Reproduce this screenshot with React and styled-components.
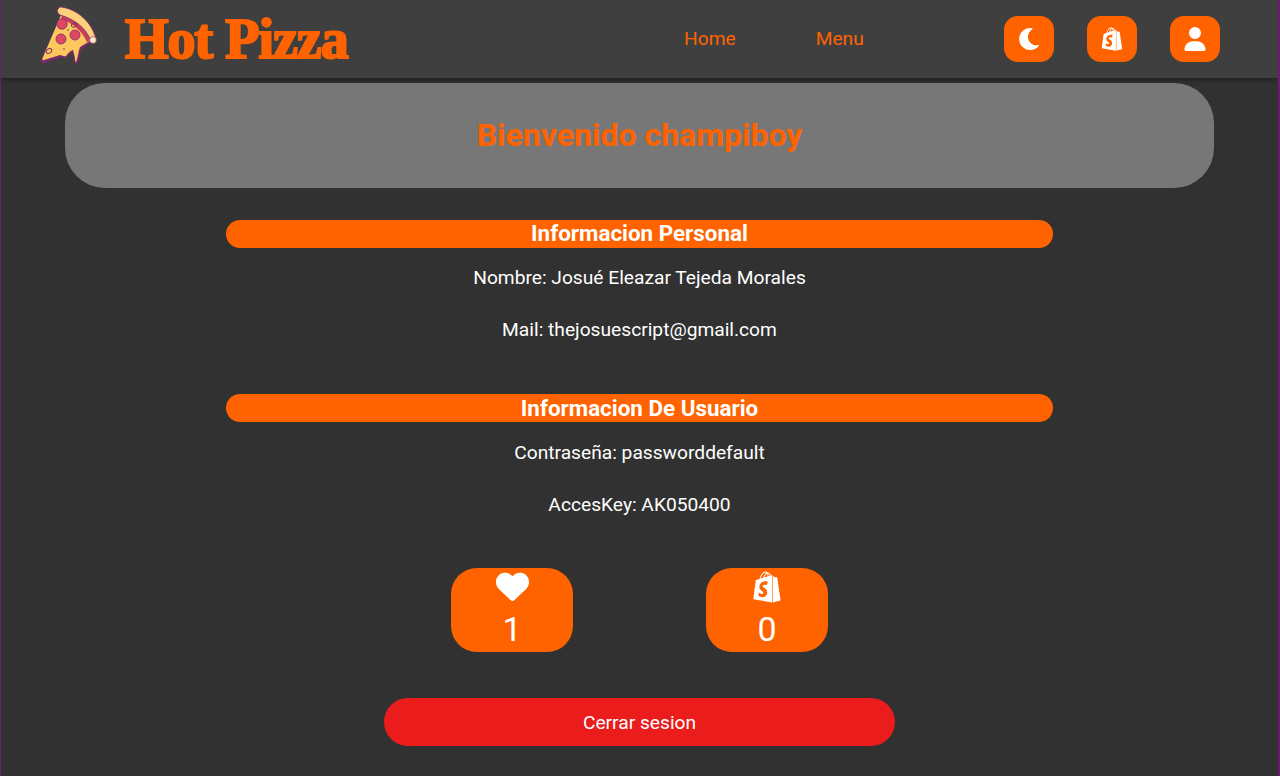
import React from "react";
import styled, { createGlobalStyle } from "styled-components";
import { FaMoon } from "react-icons/fa";
import { FaShopify, FaUser, FaHeart } from "react-icons/fa6";

const orange = "#ff6300";

const GlobalStyle = createGlobalStyle`
  html, body {
    margin: 0;
    padding: 0;
    background: #313131;
    font-family: Roboto, "Liberation Sans", sans-serif;
  }
  * {
    box-sizing: border-box;
  }
`;

const Page = styled.div`
  height: 776px;
  overflow: hidden;
  background: #313131;
  border-left: 1px solid #6f1a6f;
  border-right: 2px solid #6f1a6f;
`;

const Header = styled.header`
  height: 78px;
  display: flex;
  align-items: center;
  background: #3f3f3f;
  box-shadow: 0 2px 5px rgba(0, 0, 0, 0.35);
  padding: 0 58px 0 39px;
`;

const Logo = styled.div`
  display: flex;
  align-items: center;
  gap: 25px;
  width: 644px;
`;

const PizzaSvg = styled.svg`
  flex: none;
  margin-bottom: 6px;
`;

const Wordmark = styled.span`
  font-family: "Liberation Serif", serif;
  font-weight: 700;
  font-size: 56px;
  line-height: 1;
  letter-spacing: -1px;
  color: ${orange};
  -webkit-text-stroke: 2.2px ${orange};
  white-space: nowrap;
`;

const Nav = styled.nav`
  display: flex;
  gap: 80px;
  flex: 1;
  margin-top: -1px;
`;

const NavLink = styled.a`
  color: ${orange};
  font-size: 19.2px;
  text-decoration: none;
`;

const Actions = styled.div`
  display: flex;
  gap: 33px;
`;

const IconButton = styled.button`
  width: 50px;
  height: 46px;
  border: none;
  padding: 0;
  border-radius: 14px;
  background: ${orange};
  color: #fff;
  display: flex;
  align-items: center;
  justify-content: center;
  font-size: ${(p) => p.$size || 24}px;
`;

const Main = styled.main`
  display: flex;
  flex-direction: column;
  align-items: center;
  padding-top: 5px;
`;

const Welcome = styled.section`
  width: 1149px;
  height: 105px;
  border-radius: 40px;
  background: #777777;
  display: flex;
  align-items: center;
  justify-content: center;
  padding-bottom: 2px;
`;

const Title = styled.h1`
  margin: 0;
  color: ${orange};
  font-size: 32px;
  font-weight: 700;
`;

const Section = styled.section`
  width: 827px;
  margin-top: ${(p) => p.$top}px;
  text-align: center;
`;

const SectionTitle = styled.h2`
  margin: 0 0 19.6px;
  height: 28px;
  line-height: ${(p) => p.$line || 28}px;
  border-radius: 14px;
  background: ${orange};
  color: #fff;
  font-size: 22.4px;
  font-weight: 700;
`;

const Info = styled.p`
  margin: 0 0 31px;
  color: #fff;
  font-size: 19.2px;
  line-height: 21px;
`;

const Stats = styled.div`
  display: flex;
  justify-content: center;
  gap: 133px;
  margin-top: 22.2px;
`;

const Stat = styled.div`
  width: 122px;
  height: 84px;
  border-radius: 26px;
  background: ${orange};
  color: #fff;
  display: flex;
  flex-direction: column;
  align-items: center;
  font-size: 34px;
  line-height: 40px;
`;

const StatIcon = styled.span`
  height: 41px;
  padding-bottom: 3px;
  display: flex;
  align-items: center;
  justify-content: center;
  font-size: ${(p) => p.$size}px;
`;

const Logout = styled.button`
  width: 511px;
  height: 48px;
  margin-top: 46.1px;
  border: none;
  border-radius: 24px;
  background: #ea1c1c;
  color: #fff;
  font-family: inherit;
  font-size: 19.2px;
`;

function PizzaLogo() {
  return (
    <PizzaSvg width="60" height="60" viewBox="0 0 60 60" aria-hidden="true">
      <path
        d="M21 9 C34 12 46 22 52 36 L41 43 C40 48 39 54 37 58 C35 58 34 57 34 55 L33 47 C30 47 28 49 26 52 C24 53 22 51 21 51 L4 57 C2 58 0 56 1 54 Z"
        fill="#7b2a6e"
      />
      <path
        d="M21 9 C34 12 45 22 50 35 L40 41 C38 46 38 52 36 56 C35 56 35 54 35 52 L33 44 C30 45 28 47 26 50 C24 51 22 49 20 49 L4 54 C2 55 2 53 3 51 Z"
        fill="#fcc75c"
      />
      <path
        d="M22 9 C34 12 45 22 50 35 L47 36 C42 25 33 17 21 13 Z"
        fill="#c93a5c"
      />
      <path
        d="M21 1 C37 3 52 16 56 33 C56 36 51 36 50 33 C45 21 34 13 20 9 C16 7 17 1 21 1 Z"
        fill="#fcd07a"
        stroke="#7b2a6e"
        strokeWidth="0.8"
      />
      <circle cx="53" cy="34" r="3.4" fill="#fde9c0" stroke="#7b2a6e" strokeWidth="0.6" />
      <circle cx="22" cy="18" r="5.2" fill="#df4763" stroke="#7b2a6e" strokeWidth="0.8" />
      <circle cx="35" cy="29" r="5" fill="#df4763" stroke="#7b2a6e" strokeWidth="0.8" />
      <circle cx="21" cy="33" r="5" fill="#df4763" stroke="#7b2a6e" strokeWidth="0.8" />
      <ellipse cx="34" cy="19" rx="2.8" ry="2" fill="none" stroke="#7b2a6e" strokeWidth="0.9" transform="rotate(-35 34 19)" />
      <ellipse cx="9" cy="45" rx="3" ry="2.2" fill="none" stroke="#7b2a6e" strokeWidth="0.9" transform="rotate(-30 9 45)" />
      <circle cx="28" cy="24" r="0.8" fill="#7b2a6e" />
      <circle cx="24" cy="43" r="0.8" fill="#7b2a6e" />
    </PizzaSvg>
  );
}

export default function App() {
  return (
    <>
      <GlobalStyle />
      <Page>
        <Header>
          <Logo>
            <PizzaLogo />
            <Wordmark>Hot Pizza</Wordmark>
          </Logo>
          <Nav>
            <NavLink href="#">Home</NavLink>
            <NavLink href="#">Menu</NavLink>
          </Nav>
          <Actions>
            <IconButton $size={22}><FaMoon /></IconButton>
            <IconButton><FaShopify /></IconButton>
            <IconButton><FaUser /></IconButton>
          </Actions>
        </Header>
        <Main>
          <Welcome>
            <Title>Bienvenido champiboy</Title>
          </Welcome>
          <Section $top={31.6}>
            <SectionTitle $line={27}>Informacion Personal</SectionTitle>
            <Info>Nombre: Josué Eleazar Tejeda Morales</Info>
            <Info>Mail: thejosuescript@gmail.com</Info>
          </Section>
          <Section $top={23}>
            <SectionTitle>Informacion De Usuario</SectionTitle>
            <Info>Contraseña: passworddefault</Info>
            <Info>AccesKey: AK050400</Info>
          </Section>
          <Stats>
            <Stat>
              <StatIcon $size={33}><FaHeart /></StatIcon>
              1
            </Stat>
            <Stat>
              <StatIcon $size={32}><FaShopify /></StatIcon>
              0
            </Stat>
          </Stats>
          <Logout>Cerrar sesion</Logout>
        </Main>
      </Page>
    </>
  );
}
